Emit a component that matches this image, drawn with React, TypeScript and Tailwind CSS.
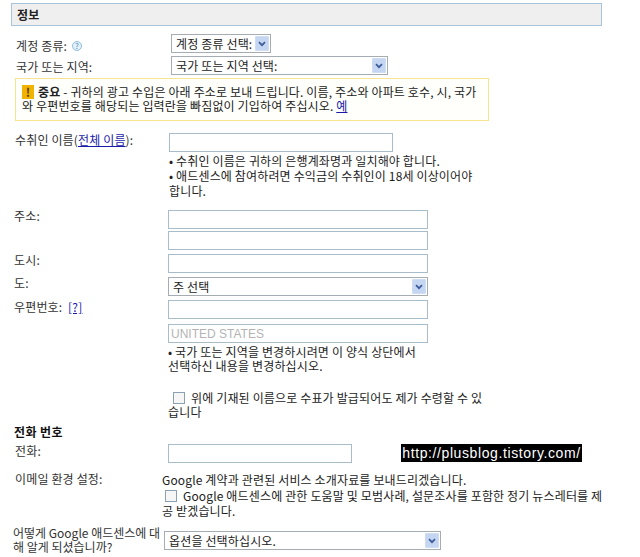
const font = { fontFamily: '"Noto Sans CJK KR", "Liberation Sans", sans-serif' };

function Sel({ text, className }: { text: string; className: string }) {
  return (
    <div className={`flex h-[19px] items-center justify-between border border-[#a5acb2] bg-white pl-[4px] pr-[1px] text-[12px] text-[#222] ${className}`}>
      <span className="whitespace-nowrap">{text}</span>
      <span className="flex h-[15px] w-[14px] shrink-0 items-center justify-center rounded-[1px] border border-[#d0dcf2] bg-[#c5d6f3]">
        <svg width="8" height="6" viewBox="0 0 8 6" fill="none">
          <path d="M1 1.2 L4 4.2 L7 1.2" stroke="#3a5a98" strokeWidth="1.7" />
        </svg>
      </span>
    </div>
  );
}

function Input({ className, text }: { className: string; text?: string }) {
  return (
    <div className={`flex h-[19px] items-center border border-[#a9bcc9] bg-white pl-[2px] text-[12px] tracking-normal text-[#b4b4b4] ${className}`} style={text ? { fontFamily: '"Liberation Sans", sans-serif' } : undefined}>{text}</div>
  );
}

function Row({ label, children, top }: { label: React.ReactNode; children: React.ReactNode; top: string }) {
  return (
    <div className={`flex ${top}`}>
      <div className="h-[19px] w-[154px] shrink-0 leading-[12px]">{label}</div>
      <div>{children}</div>
    </div>
  );
}

function Check() {
  return <span className="inline-block h-[12px] w-[12px] border border-[#8ba0b0] bg-[#f6f6f6] align-[-1px]" />;
}

export default function App() {
  return (
    <div className="h-[557px] w-[640px] overflow-hidden bg-white pl-[14px] pt-[3px] text-[12px] leading-[14px] tracking-[0.15px] text-[#333]" style={font}>
      <div className="-ml-[3px] flex h-[23px] w-[591px] items-center border border-[#a8c4da] bg-[#efefef] pl-[5px] text-[12px] font-bold text-[#222]">정보</div>

      <div className="ml-[2px] mt-[8px] flex h-[19px] items-center">
        <div className="flex w-[155px] items-center gap-[5px] pt-[5px]">
          <span>계정 종류:</span>
          <span className="flex h-[10px] w-[10px] items-center justify-center rounded-full border border-[#8fc0dc] bg-[#e4f1f8] text-[8px] leading-none text-[#4f93c0]">?</span>
        </div>
        <Sel text="계정 종류 선택:" className="w-[100px]" />
      </div>

      <div className="ml-[2px] mt-[3px] flex h-[19px] items-center">
        <div className="w-[155px] pt-[3px]">국가 또는 지역:</div>
        <Sel text="국가 또는 지역 선택:" className="w-[217px]" />
      </div>

      <div className="ml-[1px] mt-[3px] h-[43px] w-[474px] border border-[#f6e48e] bg-[#fffffb] px-[6px] pt-[6px] text-[#222]">
        <p className="h-[14px] whitespace-nowrap">
          <span className="mr-[4px] inline-block h-[14px] w-[12px] bg-[#f0b400] text-center align-top font-bold leading-[14px] text-[#5a3a00]">!</span>
          <b>중요</b> - 귀하의 광고 수입은 아래 주소로 보내 드립니다. 이름, 주소와 아파트 호수, 시, 국가
        </p>
        <p className="whitespace-nowrap">
          와 우편번호를 해당되는 입력란을 빠짐없이 기입하여 주십시오. <a className="text-[#1a1aa8] underline">예</a>
        </p>
      </div>

      <div className="ml-[1px] mt-[12px] flex">
        <div className="w-[154px] shrink-0 whitespace-nowrap">
          수취인 이름(<a className="text-[#1a1aa8] underline">전체 이름</a>):
        </div>
        <div className="w-[320px]">
          <Input className="w-[224px]" />
          <div className="mt-[1px] text-[#222]">
            <p className="whitespace-nowrap leading-[15px]">• 수취인 이름은 귀하의 은행계좌명과 일치해야 합니다.</p>
            <p className="whitespace-nowrap leading-[15px]">• 애드센스에 참여하려면 수익금의 수취인이 18세 이상이어야<br />합니다.</p>
          </div>
        </div>
      </div>

      <Row top="mt-[12px]" label="주소:"><Input className="w-[260px]" /></Row>
      <Row top="mt-[2px]" label=""><Input className="w-[260px]" /></Row>
      <Row top="mt-[4px]" label="도시:"><Input className="w-[260px]" /></Row>
      <Row top="mt-[4px]" label="도:"><Sel text="주 선택" className="w-[260px]" /></Row>
      <Row
        top="mt-[4px]"
        label={<span className="relative top-[1px]">우편번호: <a className="ml-[3px] text-[#1a1aa8] underline">[?]</a></span>}
      >
        <Input className="w-[260px]" />
      </Row>
      <Row top="mt-[5px]" label=""><Input className="w-[260px]" text="UNITED STATES" /></Row>

      <div className="ml-[154px] mt-[2px] w-[280px] text-[#222]">
        <p className="whitespace-nowrap leading-[14px]">• 국가 또는 지역을 변경하시려면 이 양식 상단에서<br />선택하신 내용을 변경하십시오.</p>
      </div>

      <div className="ml-[154px] mt-[18px] w-[330px] text-[#222]">
        <p className="whitespace-nowrap leading-[14px]"><span className="ml-[5px] mr-[6px]"><Check /></span>위에 기재된 이름으로 수표가 발급되어도 제가 수령할 수 있<br />습니다</p>
      </div>

      <div className="mt-[6px] text-[12px] font-bold tracking-[0.4px] text-[#111]">전화 번호</div>

      <div className="relative ml-[1px] mt-[4px] flex">
        <div className="w-[153px] shrink-0 pt-[1px]">전화:</div>
        <Input className="mt-[1px] w-[184px]" />
        <div className="absolute left-[386px] top-[1px] flex h-[18px] w-[181px] items-center justify-center whitespace-nowrap bg-black text-[14px] tracking-[0.6px] text-white" style={{ fontFamily: '"Liberation Sans", sans-serif' }}>
          http://plusblog.tistory.com/
        </div>
      </div>

      <div className="ml-[1px] mt-[8px] flex">
        <div className="w-[147px] shrink-0 pt-[1px]">이메일 환경 설정:</div>
        <div className="text-[#222]">
          <p className="whitespace-nowrap leading-[17px]">Google 계약과 관련된 서비스 소개자료를 보내드리겠습니다.</p>
          <p className="whitespace-nowrap leading-[15px]"><span className="ml-[3px] mr-[6px]"><Check /></span>Google 애드센스에 관한 도움말 및 모범사례, 설문조사를 포함한 정기 뉴스레터를 제<br />공 받겠습니다.</p>
        </div>
      </div>

      <div className="ml-[-1px] mt-[8px] flex items-start">
        <div className="w-[151px] shrink-0 whitespace-nowrap leading-[14px] tracking-normal">어떻게 Google 애드센스에 대<br />해 알게 되셨습니까?</div>
        <Sel text="옵션을 선택하십시오." className="mt-[5px] w-[277px]" />
      </div>
    </div>
  );
}
